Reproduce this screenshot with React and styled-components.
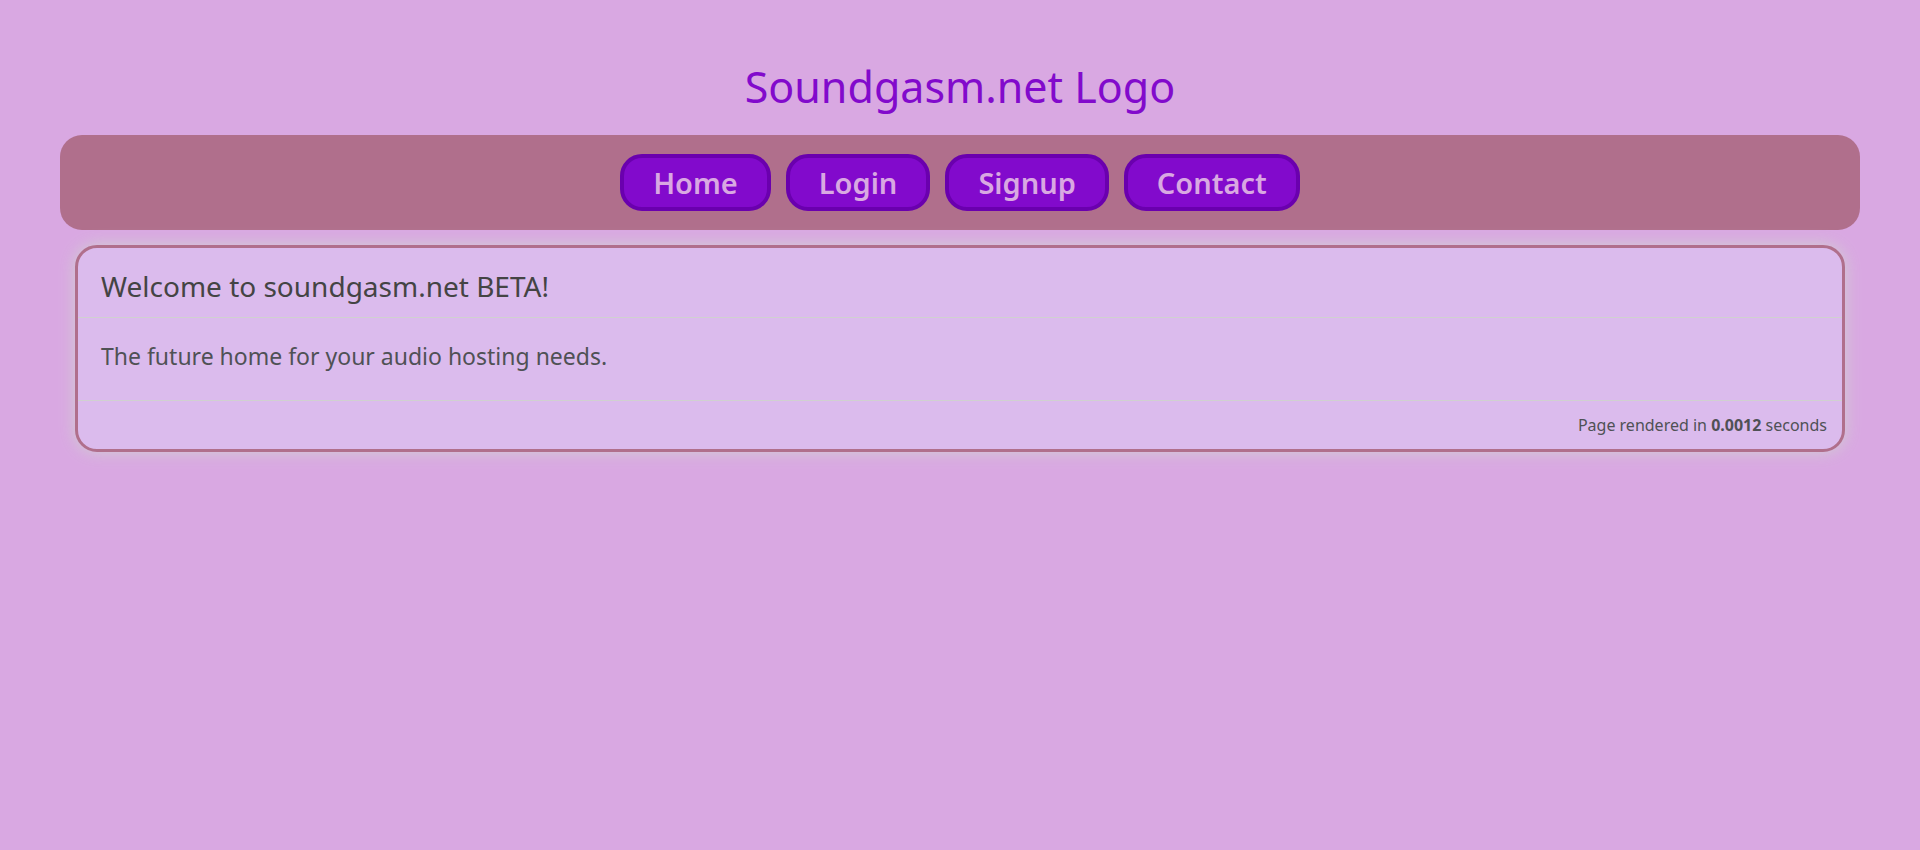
import React from "react";
import styled, { createGlobalStyle } from "styled-components";

const GlobalStyle = createGlobalStyle`
  * { box-sizing: border-box; }
  body {
    margin: 0;
    background: #d9a8e2;
    color: #4f5155;
    font-family: "Noto Sans", "Open Sans", sans-serif;
  }
`;

const Page = styled.div`
  padding: 60px;
`;

const Logo = styled.h1`
  margin: 0 0 21px;
  color: #820acc;
  font-size: 43px;
  line-height: 54px;
  font-weight: 400;
  text-align: center;
`;

const Nav = styled.nav`
  display: flex;
  flex-wrap: wrap;
  justify-content: center;
  gap: 15px;
  padding: 19px;
  background: #b06f8c;
  border-radius: 22px;
`;

const NavLink = styled.a`
  padding: 0 29px;
  border: 4px solid #6a00ae;
  border-radius: 22px;
  background: #820acc;
  color: #d9a8e2;
  font-size: 29px;
  line-height: 49px;
  font-weight: 600;
  text-align: center;
  text-decoration: none;
`;

const Card = styled.main`
  margin: 15px 15px 0;
  border: 3px solid #b06f8c;
  border-radius: 22px;
  background: #dbbbed;
  box-shadow: 0 0 16px #d0d0d0;
`;

const CardTitle = styled.h2`
  margin: 0;
  padding: 20px 23px 13px;
  border-bottom: 1px solid #d0d0d0;
  color: #444;
  font-size: 28px;
  line-height: 36px;
  font-weight: 400;
`;

const CardBody = styled.p`
  margin: 0;
  padding: 22px 23px 28px;
  font-size: 23px;
  line-height: 32px;
`;

const CardFooter = styled.footer`
  padding: 8px 15px;
  border-top: 1px solid #d0d0d0;
  font-size: 16px;
  line-height: 32px;
  text-align: right;
`;

const links = ["Home", "Login", "Signup", "Contact"];

export default function App() {
  return (
    <>
      <GlobalStyle />
      <Page>
        <Logo>Soundgasm.net Logo</Logo>
        <Nav>
          {links.map((label) => (
            <NavLink key={label} href="#">{label}</NavLink>
          ))}
        </Nav>
        <Card>
          <CardTitle>Welcome to soundgasm.net BETA!</CardTitle>
          <CardBody>The future home for your audio hosting needs.</CardBody>
          <CardFooter>
            Page rendered in <strong>0.0012</strong> seconds
          </CardFooter>
        </Card>
      </Page>
    </>
  );
}
